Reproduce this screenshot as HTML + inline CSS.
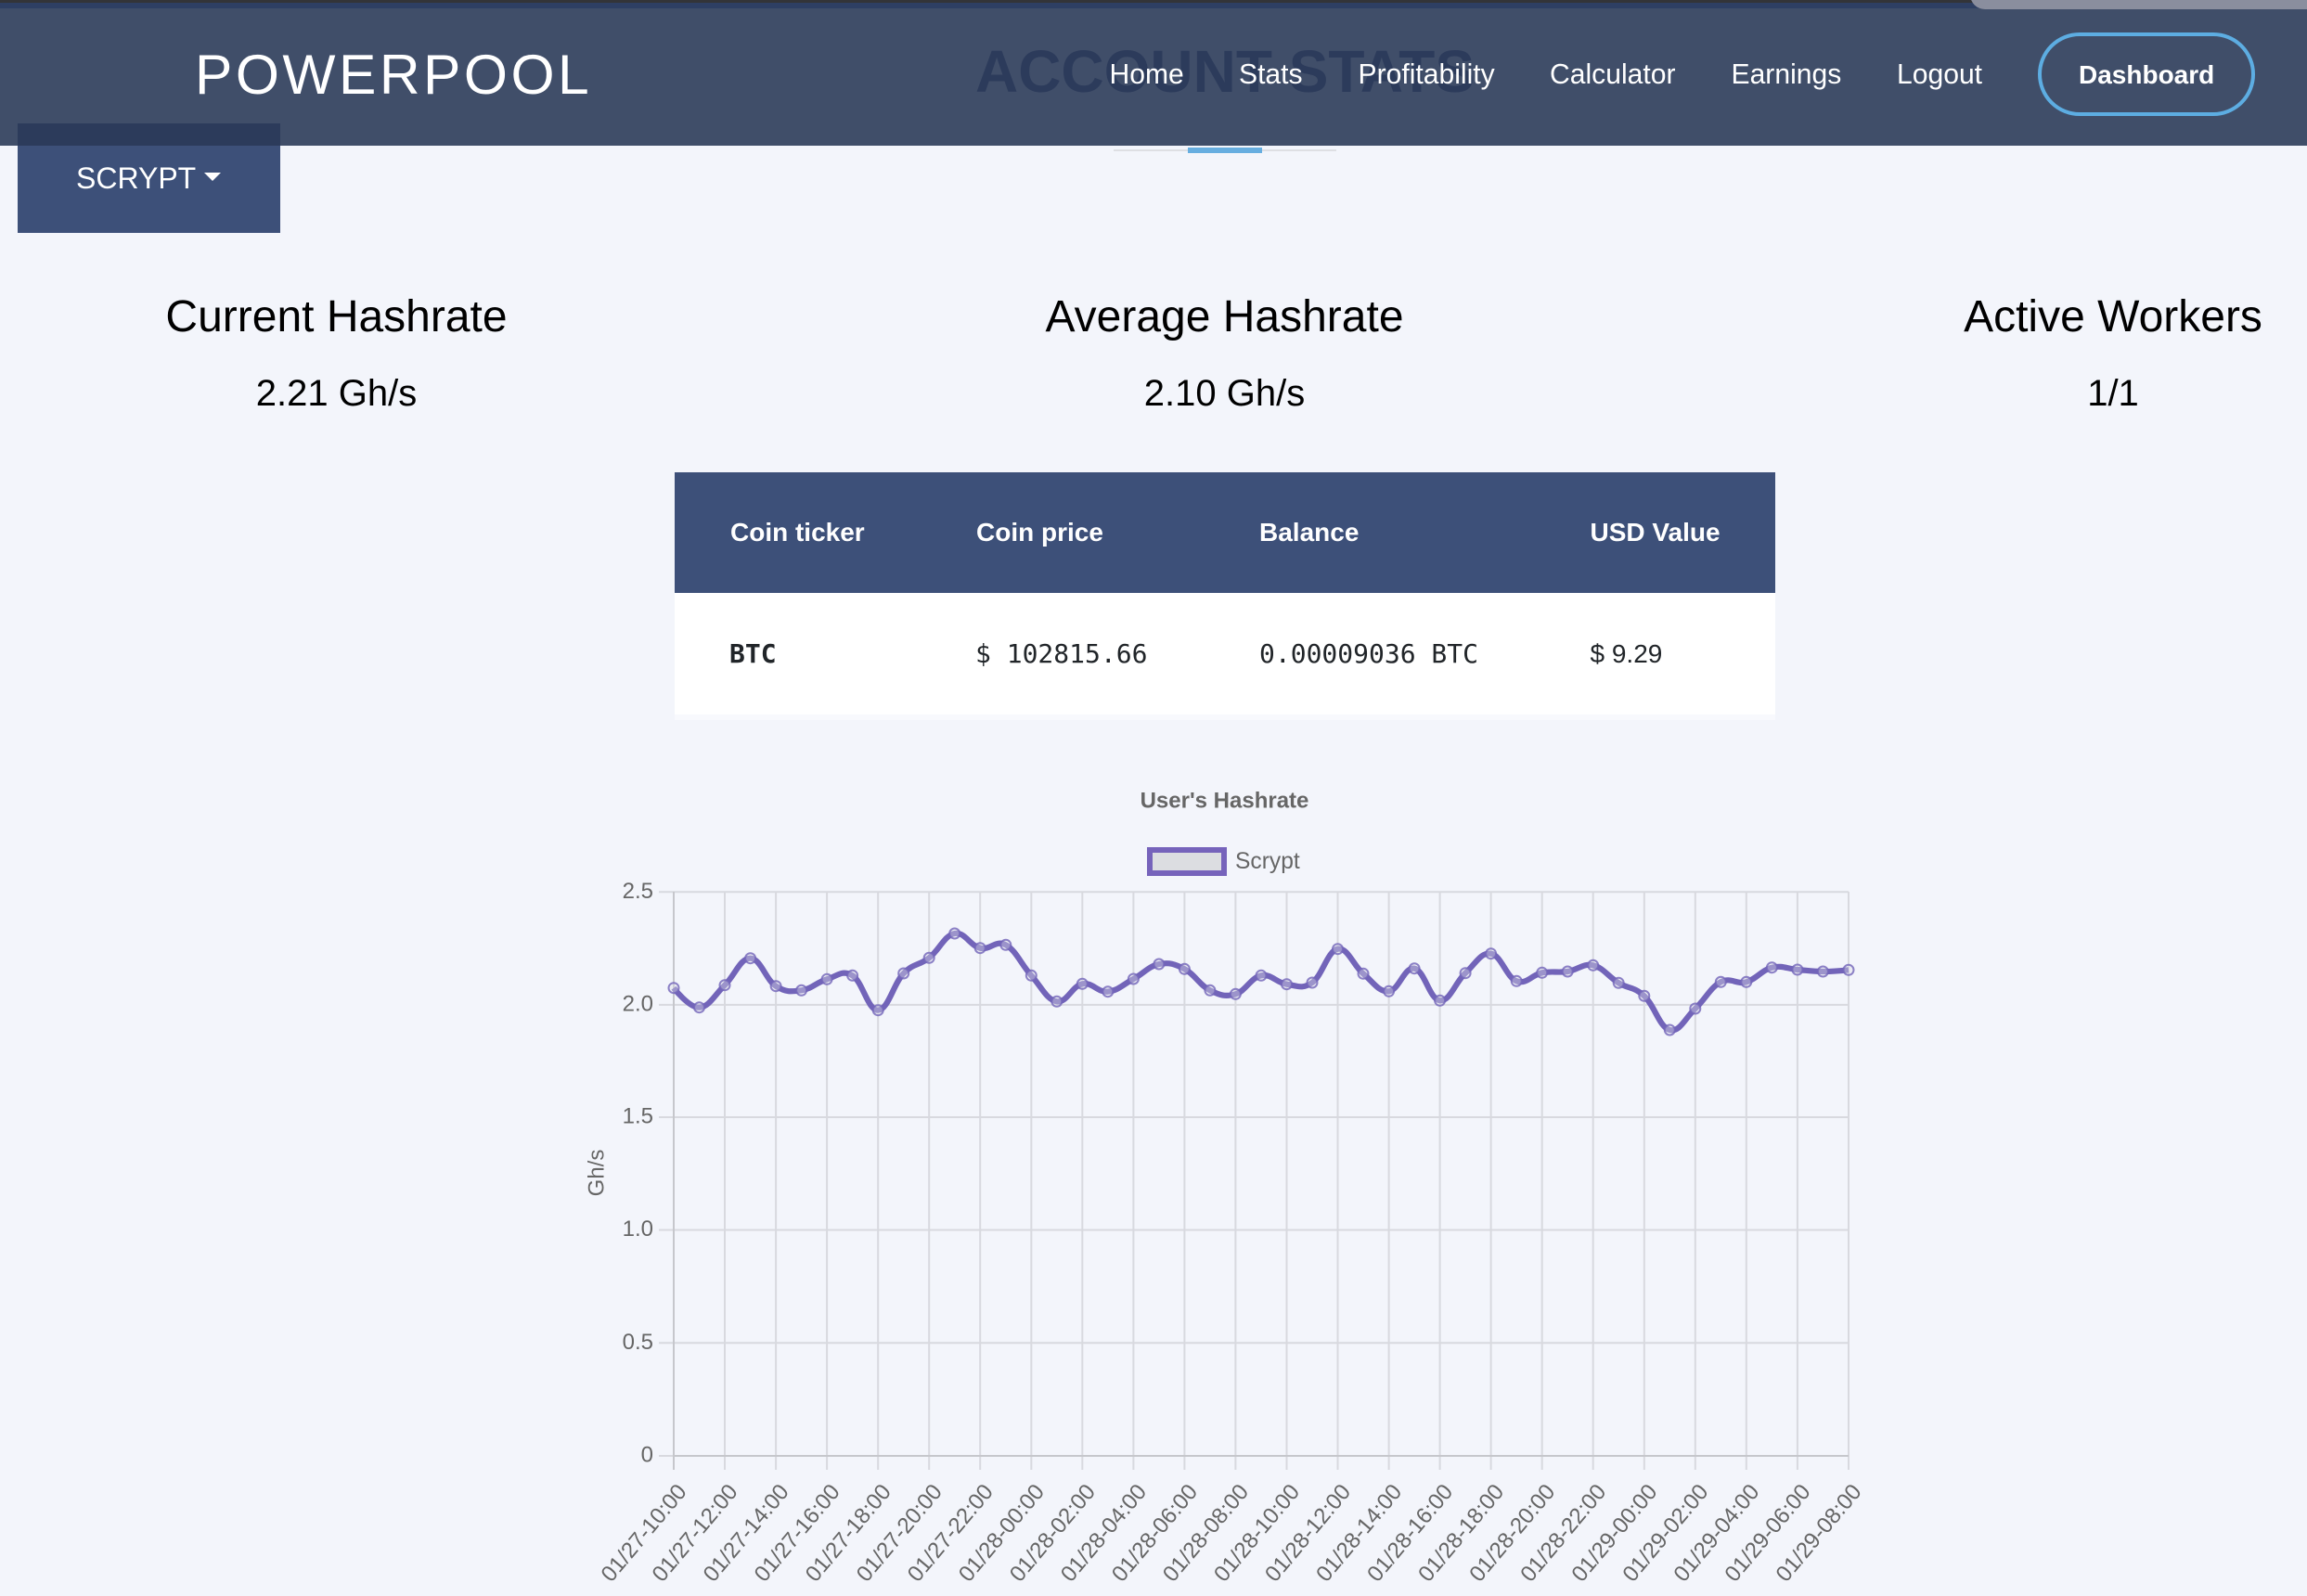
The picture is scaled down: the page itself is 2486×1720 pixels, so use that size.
<!DOCTYPE html>
<html lang="en">
<head>
<meta charset="utf-8">
<title>PowerPool - Account Stats</title>
<style>
html,body{margin:0;padding:0;}
body{width:2486px;height:1720px;overflow:hidden;background:#f3f5fb;position:relative;font-family:"Liberation Sans",Arial,sans-serif;color:#000;}
.t{position:absolute;line-height:0;white-space:nowrap;}
.c{transform:translateX(-50%);}
.box{position:absolute;}
.mono{font-family:"DejaVu Sans Mono","Liberation Mono",monospace;color:#212529;font-size:28px;}
.th{font-weight:700;color:#fff;font-size:28px;}
.nav{color:#fff;font-size:30.1px;}
svg{position:absolute;left:0;top:0;}
svg text{font-family:"Liberation Sans",Arial,sans-serif;fill:#666;font-size:24px;}
</style>
</head>
<body>
<!-- Section heading behind header -->
<div class="box" style="left:1200px;top:161px;width:240px;height:2px;background:#dedfe3;"></div>
<div class="box" style="left:1280px;top:159px;width:80px;height:6px;background:#67aee0;"></div>

<!-- Header -->
<div class="box" style="left:0;top:0;width:2486px;height:157px;background:#404e69;"></div>
<div class="box" style="left:0;top:0;width:2486px;height:9px;background:#2e3f63;"></div>
<div class="box" style="left:0;top:0;width:2486px;height:3px;background:#333438;"></div>
<div class="box" style="left:2123px;top:-10px;width:380px;height:20px;background:#8a8e9e;border-radius:0 0 0 16px;"></div>
<div class="t" style="left:1320px;top:77px;font-size:64px;font-weight:700;color:#2c3b5b;transform:translateX(-50%);">ACCOUNT STATS</div>
<div class="t" style="left:210px;top:80px;font-size:60.5px;letter-spacing:3.5px;color:#fff;">POWERPOOL</div>

<div class="t nav" style="left:1195.5px;top:81px;">Home</div>
<div class="t nav" style="left:1335px;top:81px;">Stats</div>
<div class="t nav" style="left:1463.5px;top:81px;">Profitability</div>
<div class="t nav" style="left:1670px;top:81px;">Calculator</div>
<div class="t nav" style="left:1865.5px;top:81px;">Earnings</div>
<div class="t nav" style="left:2044px;top:81px;">Logout</div>
<div class="box" style="left:2196px;top:35px;width:226px;height:82px;border:4px solid #5dade2;border-radius:45px;"></div>
<div class="t" style="left:2240px;top:80.8px;font-size:28px;font-weight:700;color:#fff;">Dashboard</div>

<!-- Dropdown -->
<div class="box" style="left:19px;top:133px;width:283px;height:118px;background:#3d5079;"></div>
<div class="box" style="left:19px;top:133px;width:283px;height:24px;background:#2c3b5b;"></div>
<div class="t" style="left:82px;top:192px;font-size:32px;color:#fff;">SCRYPT</div>
<div class="box" style="left:220px;top:186px;width:0;height:0;border-left:9px solid transparent;border-right:9px solid transparent;border-top:9px solid #fff;"></div>

<!-- Stats -->
<div class="t c" style="left:362.5px;top:342px;font-size:48px;">Current Hashrate</div>
<div class="t c" style="left:362.5px;top:423.8px;font-size:40px;">2.21 Gh/s</div>
<div class="t c" style="left:1319.5px;top:342px;font-size:48px;">Average Hashrate</div>
<div class="t c" style="left:1319.5px;top:423.8px;font-size:40px;">2.10 Gh/s</div>
<div class="t c" style="left:2277px;top:342px;font-size:48px;">Active Workers</div>
<div class="t c" style="left:2277px;top:423.8px;font-size:40px;">1/1</div>

<!-- Table -->
<div class="box" style="left:727px;top:509px;width:1186px;height:267px;background:#f8f9fd;"></div>
<div class="box" style="left:727px;top:509px;width:1186px;height:130px;background:#3d5079;"></div>
<div class="box" style="left:727px;top:639px;width:1186px;height:131px;background:#fff;"></div>
<div class="t th" style="left:787px;top:574.4px;">Coin ticker</div>
<div class="t th" style="left:1052px;top:574.4px;">Coin price</div>
<div class="t th" style="left:1357px;top:574.4px;">Balance</div>
<div class="t th" style="left:1713.5px;top:574.4px;">USD Value</div>
<div class="t mono" style="left:786px;top:704.8px;font-weight:700;">BTC</div>
<div class="t mono" style="left:1051px;top:704.8px;">$ 102815.66</div>
<div class="t mono" style="left:1357px;top:704.8px;">0.00009036 BTC</div>
<div class="t" style="left:1713.5px;top:705.4px;font-size:28px;color:#212529;">$ 9.29</div>

<!-- Chart -->
<svg width="2486" height="1720" viewBox="0 0 2486 1720">
  <text x="1319.5" y="870.5" text-anchor="middle" style="font-weight:700;">User's Hashrate</text>
  <rect x="1239" y="916" width="80" height="25" fill="#dcdde1" stroke="#7663bb" stroke-width="6"/>
  <text x="1331" y="936" style="font-size:24.6px;">Scrypt</text>

  <g stroke="#d8d9df" stroke-width="2" fill="none">
    <path d="M710 961.3H1992M710 1082.9H1992M710 1204H1992M710 1325.5H1992M710 1447.3H1992M710 1569H726"/>
    <path d="M781 961V1584M836.1 961V1584M891.1 961V1584M946.2 961V1584M1001.2 961V1584M1056.2 961V1584M1111.3 961V1584M1166.3 961V1584M1221.4 961V1584M1276.4 961V1584M1331.4 961V1584M1386.5 961V1584M1441.5 961V1584M1496.6 961V1584M1551.6 961V1584M1606.6 961V1584M1661.7 961V1584M1716.7 961V1584M1771.8 961V1584M1826.8 961V1584M1881.8 961V1584M1936.9 961V1584M1992 961V1584"/>
  </g>
  <path d="M726 961V1584M726 1569H1992" stroke="#c6c7cc" stroke-width="2" fill="none"/>

  <g text-anchor="end">
    <text x="704" y="968">2.5</text>
    <text x="704" y="1089.5">2.0</text>
    <text x="704" y="1210.5">1.5</text>
    <text x="704" y="1332">1.0</text>
    <text x="704" y="1454">0.5</text>
    <text x="704" y="1575.5">0</text>
  </g>
  <text transform="translate(650.7,1264) rotate(-90)" text-anchor="middle">Gh/s</text>

  <path fill="none" stroke="#7264b9" stroke-width="6.2" stroke-linejoin="round" stroke-linecap="butt" d="M726 1064.7C726 1064.7 742.5 1086.3 753.5 1085.7S770 1072.3 781 1061.7S797.6 1032.5 808.6 1032.7S825.1 1055.8 836.1 1062.7S852.6 1068.8 863.6 1067.3S880.1 1058.5 891.1 1055.3S907.6 1044.6 918.6 1051.3S935.2 1089.2 946.2 1088.7S962.7 1060.3 973.7 1049S990.2 1040.9 1001.2 1032.3S1017.7 1008.1 1028.7 1006S1045.2 1019.2 1056.2 1021.7S1072.8 1012.4 1083.8 1018.3S1100.3 1039.1 1111.3 1051.3S1127.8 1077.5 1138.8 1079.3S1155.3 1062.4 1166.3 1060.3S1182.8 1069.8 1193.8 1068.7S1210.4 1060.9 1221.4 1055S1237.9 1041.1 1248.9 1039S1265.4 1038.6 1276.4 1044.3S1292.9 1061.9 1303.9 1067.3S1320.4 1074.5 1331.4 1071.3S1348 1053.4 1359 1051.3S1375.5 1059.2 1386.5 1060.7S1403 1066.6 1414 1059S1430.5 1024.6 1441.5 1022.7S1458 1040.2 1469 1049.3S1485.6 1069.4 1496.6 1068.3S1513.1 1041.7 1524.1 1043.7S1540.6 1077.3 1551.6 1078.3S1568.1 1058.8 1579.1 1048.7S1595.6 1026 1606.6 1027.7S1623.2 1053.2 1634.2 1057.3S1650.7 1050.4 1661.7 1048.3S1678.2 1048.6 1689.2 1047S1705.7 1037.8 1716.7 1040.3S1733.2 1052.7 1744.2 1059.3S1760.8 1063.2 1771.8 1073.3S1788.3 1107.3 1799.3 1110S1815.8 1097.3 1826.8 1087S1843.3 1064 1854.3 1058.3S1870.8 1061.4 1881.8 1058.3S1898.4 1045.4 1909.4 1042.7S1925.9 1044.1 1936.9 1045S1953.4 1046.9 1964.4 1047S1992 1045.3 1992 1045.3"/>

  <g fill="#dcdde6" fill-opacity=".4" stroke="#7264b9" stroke-opacity=".8" stroke-width="2">
    <circle cx="726" cy="1064.7" r="5.5"/><circle cx="753.5" cy="1085.7" r="5.5"/><circle cx="781" cy="1061.7" r="5.5"/><circle cx="808.6" cy="1032.7" r="5.5"/><circle cx="836.1" cy="1062.7" r="5.5"/><circle cx="863.6" cy="1067.3" r="5.5"/><circle cx="891.1" cy="1055.3" r="5.5"/><circle cx="918.6" cy="1051.3" r="5.5"/><circle cx="946.2" cy="1088.7" r="5.5"/><circle cx="973.7" cy="1049" r="5.5"/><circle cx="1001.2" cy="1032.3" r="5.5"/><circle cx="1028.7" cy="1006" r="5.5"/><circle cx="1056.2" cy="1021.7" r="5.5"/><circle cx="1083.8" cy="1018.3" r="5.5"/><circle cx="1111.3" cy="1051.3" r="5.5"/><circle cx="1138.8" cy="1079.3" r="5.5"/><circle cx="1166.3" cy="1060.3" r="5.5"/><circle cx="1193.8" cy="1068.7" r="5.5"/><circle cx="1221.4" cy="1055" r="5.5"/><circle cx="1248.9" cy="1039" r="5.5"/><circle cx="1276.4" cy="1044.3" r="5.5"/><circle cx="1303.9" cy="1067.3" r="5.5"/><circle cx="1331.4" cy="1071.3" r="5.5"/><circle cx="1359" cy="1051.3" r="5.5"/><circle cx="1386.5" cy="1060.7" r="5.5"/><circle cx="1414" cy="1059" r="5.5"/><circle cx="1441.5" cy="1022.7" r="5.5"/><circle cx="1469" cy="1049.3" r="5.5"/><circle cx="1496.6" cy="1068.3" r="5.5"/><circle cx="1524.1" cy="1043.7" r="5.5"/><circle cx="1551.6" cy="1078.3" r="5.5"/><circle cx="1579.1" cy="1048.7" r="5.5"/><circle cx="1606.6" cy="1027.7" r="5.5"/><circle cx="1634.2" cy="1057.3" r="5.5"/><circle cx="1661.7" cy="1048.3" r="5.5"/><circle cx="1689.2" cy="1047" r="5.5"/><circle cx="1716.7" cy="1040.3" r="5.5"/><circle cx="1744.2" cy="1059.3" r="5.5"/><circle cx="1771.8" cy="1073.3" r="5.5"/><circle cx="1799.3" cy="1110" r="5.5"/><circle cx="1826.8" cy="1087" r="5.5"/><circle cx="1854.3" cy="1058.3" r="5.5"/><circle cx="1881.8" cy="1058.3" r="5.5"/><circle cx="1909.4" cy="1042.7" r="5.5"/><circle cx="1936.9" cy="1045" r="5.5"/><circle cx="1964.4" cy="1047" r="5.5"/><circle cx="1992" cy="1045.3" r="5.5"/>
  </g>

  <g text-anchor="end">
    <text transform="translate(741,1608) rotate(-50)">01/27-10:00</text>
    <text transform="translate(796,1608) rotate(-50)">01/27-12:00</text>
    <text transform="translate(851.1,1608) rotate(-50)">01/27-14:00</text>
    <text transform="translate(906.1,1608) rotate(-50)">01/27-16:00</text>
    <text transform="translate(961.2,1608) rotate(-50)">01/27-18:00</text>
    <text transform="translate(1016.2,1608) rotate(-50)">01/27-20:00</text>
    <text transform="translate(1071.2,1608) rotate(-50)">01/27-22:00</text>
    <text transform="translate(1126.3,1608) rotate(-50)">01/28-00:00</text>
    <text transform="translate(1181.3,1608) rotate(-50)">01/28-02:00</text>
    <text transform="translate(1236.4,1608) rotate(-50)">01/28-04:00</text>
    <text transform="translate(1291.4,1608) rotate(-50)">01/28-06:00</text>
    <text transform="translate(1346.4,1608) rotate(-50)">01/28-08:00</text>
    <text transform="translate(1401.5,1608) rotate(-50)">01/28-10:00</text>
    <text transform="translate(1456.5,1608) rotate(-50)">01/28-12:00</text>
    <text transform="translate(1511.6,1608) rotate(-50)">01/28-14:00</text>
    <text transform="translate(1566.6,1608) rotate(-50)">01/28-16:00</text>
    <text transform="translate(1621.6,1608) rotate(-50)">01/28-18:00</text>
    <text transform="translate(1676.7,1608) rotate(-50)">01/28-20:00</text>
    <text transform="translate(1731.7,1608) rotate(-50)">01/28-22:00</text>
    <text transform="translate(1786.8,1608) rotate(-50)">01/29-00:00</text>
    <text transform="translate(1841.8,1608) rotate(-50)">01/29-02:00</text>
    <text transform="translate(1896.8,1608) rotate(-50)">01/29-04:00</text>
    <text transform="translate(1951.9,1608) rotate(-50)">01/29-06:00</text>
    <text transform="translate(2007,1608) rotate(-50)">01/29-08:00</text>
  </g>
</svg>
</body>
</html>
